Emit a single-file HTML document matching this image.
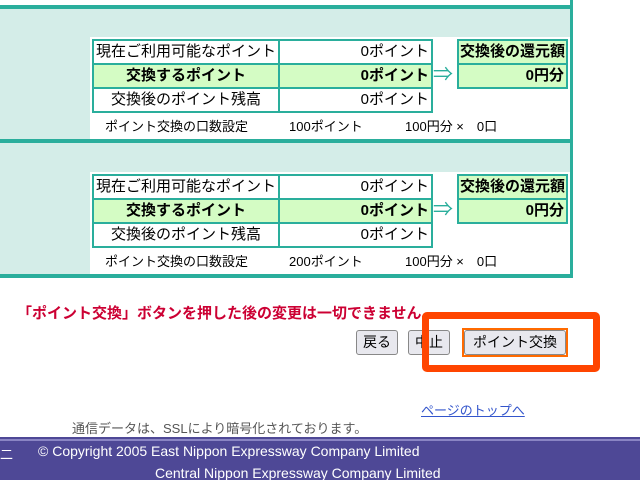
<!DOCTYPE html>
<html><head><meta charset="utf-8"><style>
*{margin:0;padding:0;box-sizing:border-box}
body{width:640px;height:480px;overflow:hidden;background:#fff;position:relative;font-family:"Liberation Sans","Noto Sans CJK JP",sans-serif;font-size:14px;color:#000}
.a{position:absolute;white-space:nowrap}
.teal{background:#2aae9c}
.lt{background:#d4ede8}
.c{position:absolute;border:2px solid #2aae9c;height:26px;line-height:22px;white-space:nowrap;overflow:hidden;font-size:15px}
.g{background:#d4fcc4;font-weight:bold}
.btn{position:absolute;border:1px solid #888;border-radius:3px;background:#e8e8ee;height:25px;line-height:23px;text-align:center;font-size:14px;white-space:nowrap}
.sec{position:absolute;left:0;width:640px;height:140px}
.sm{font-size:13px;top:116px}
</style></head><body>
<div class="a lt" style="left:0;top:9px;width:570px;height:265px"></div>
<div class="a" style="left:90px;top:0;width:480px;height:6px;background:#fff"></div>
<div class="a teal" style="left:0;top:5px;width:573px;height:4px"></div>
<div class="a teal" style="left:570px;top:0;width:3px;height:278px"></div>

<div class="a" style="left:90px;top:37px;width:480px;height:102px;background:#fff"></div>
<div class="a teal" style="left:0;top:139px;width:573px;height:4px"></div>
<div class="a" style="left:90px;top:172px;width:480px;height:102px;background:#fff"></div>
<div class="a teal" style="left:0;top:274px;width:573px;height:4px"></div>

<div class="sec" style="top:0">
<div class="c" style="left:92px;top:39px;width:188px;padding-left:2px">現在ご利用可能なポイント</div>
<div class="c" style="left:278px;top:39px;width:155px;text-align:right;padding-right:2px">0ポイント</div>
<div class="c g" style="left:92px;top:63px;width:188px;text-align:center">交換するポイント</div>
<div class="c g" style="left:278px;top:63px;width:155px;text-align:right;padding-right:2px">0ポイント</div>
<div class="c" style="left:92px;top:87px;width:188px;text-align:center">交換後のポイント残高</div>
<div class="c" style="left:278px;top:87px;width:155px;text-align:right;padding-right:2px">0ポイント</div>
<div class="a" style="left:433px;top:65px;color:#2aae9c;font-size:20px;line-height:20px">⇒</div>
<div class="c g" style="left:457px;top:39px;width:111px;text-align:center">交換後の還元額</div>
<div class="c g" style="left:457px;top:63px;width:111px;text-align:right;padding-right:2px">0円分</div>
<div class="a sm" style="left:105px">ポイント交換の口数設定</div>
<div class="a sm" style="left:289px">100ポイント</div>
<div class="a sm" style="left:405px">100円分 ×　0口</div>
</div>
<div class="sec" style="top:135px">
<div class="c" style="left:92px;top:39px;width:188px;padding-left:2px">現在ご利用可能なポイント</div>
<div class="c" style="left:278px;top:39px;width:155px;text-align:right;padding-right:2px">0ポイント</div>
<div class="c g" style="left:92px;top:63px;width:188px;text-align:center">交換するポイント</div>
<div class="c g" style="left:278px;top:63px;width:155px;text-align:right;padding-right:2px">0ポイント</div>
<div class="c" style="left:92px;top:87px;width:188px;text-align:center">交換後のポイント残高</div>
<div class="c" style="left:278px;top:87px;width:155px;text-align:right;padding-right:2px">0ポイント</div>
<div class="a" style="left:433px;top:65px;color:#2aae9c;font-size:20px;line-height:20px">⇒</div>
<div class="c g" style="left:457px;top:39px;width:111px;text-align:center">交換後の還元額</div>
<div class="c g" style="left:457px;top:63px;width:111px;text-align:right;padding-right:2px">0円分</div>
<div class="a sm" style="left:105px">ポイント交換の口数設定</div>
<div class="a sm" style="left:289px">200ポイント</div>
<div class="a sm" style="left:405px">100円分 ×　0口</div>
</div>

<div class="a" style="left:17px;top:302px;color:#cc0033;font-weight:bold;font-size:15px">「ポイント交換」ボタンを押した後の変更は一切できません。</div>
<div class="btn" style="left:356px;top:330px;width:42px">戻る</div>
<div class="btn" style="left:408px;top:330px;width:42px">中止</div>
<div class="a" style="left:462px;top:328px;width:106px;height:29px;border:2px solid #ff6a00"></div>
<div class="btn" style="left:464px;top:330px;width:102px">ポイント交換</div>
<div class="a" style="left:422px;top:312px;width:178px;height:60px;border:7px solid #ff4500;border-radius:5px"></div>

<div class="a" style="left:421px;top:400px;color:#3355cc;text-decoration:underline;font-size:13px">ページのトップへ</div>
<div class="a" style="left:72px;top:418px;color:#555;font-size:13px">通信データは、SSLにより暗号化されております。</div>

<div class="a" style="left:0;top:437px;width:640px;height:43px;background:#4e4896"></div>
<div class="a" style="left:0;top:439px;width:640px;height:2px;background:#8a85c4"></div>
<div class="a" style="left:0;top:444px;color:#fff;font-size:13px">二</div>
<div class="a" style="left:38px;top:443px;color:#fff;font-size:14px">© Copyright 2005 East Nippon Expressway Company Limited</div>
<div class="a" style="left:155px;top:465px;color:#fff;font-size:14px">Central Nippon Expressway Company Limited</div>
</body></html>
